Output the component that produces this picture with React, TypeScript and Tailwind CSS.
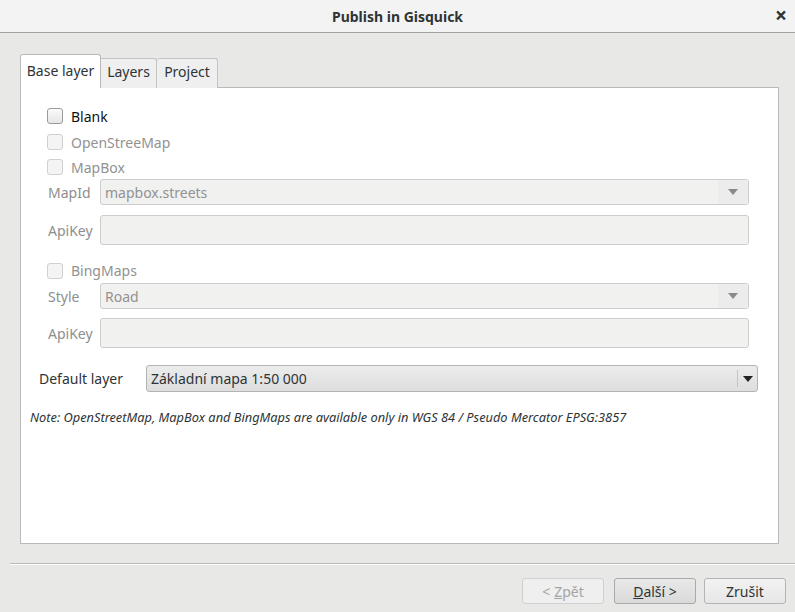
import React from 'react';

const font = { fontFamily: '"Noto Sans", "Open Sans", sans-serif' };

const Check: React.FC<{ label: string; disabled?: boolean }> = ({ label, disabled }) => (
  <div className="flex items-center h-full">
    <span className={`w-[16px] h-[16px] rounded-[3px] border ${disabled ? 'border-[#cfcfcf] bg-[#f4f4f4]' : 'border-[#9a9a9a] bg-gradient-to-b from-[#fbfbfb] to-[#e6e6e6]'}`} />
    <span className={`ml-[8px] text-[14px] ${disabled ? 'text-[#929292]' : 'text-[#111]'}`}>{label}</span>
  </div>
);

const Arrow: React.FC<{ color: string }> = ({ color }) => (
  <svg width="10" height="6" viewBox="0 0 10 6">
    <path d="M0 0h10L5 6z" fill={color} />
  </svg>
);

const DisabledCombo: React.FC<{ value: string }> = ({ value }) => (
  <div className="flex-1 h-[26px] flex items-center rounded-[3px] border border-[#cdcdcd] bg-[#f1f1f0] overflow-hidden">
    <span className="flex-1 pl-[4px] text-[14px] text-[#929292]">{value}</span>
    <span className="w-[30px] h-full flex items-center justify-center bg-[#ececec]">
      <Arrow color="#8a8a8a" />
    </span>
  </div>
);

const DisabledInput: React.FC = () => (
  <div className="flex-1 h-[30px] rounded-[3px] border border-[#cdcdcd] bg-[#f1f1f0]" />
);

const FieldRow: React.FC<{ label: string; children: React.ReactNode; className?: string }> = ({ label, children, className }) => (
  <div className={`flex items-center pl-[27px] pr-[29px] ${className ?? ''}`}>
    <span className="w-[52px] text-[14px] text-[#8e8e8e]">{label}</span>
    {children}
  </div>
);

const Button: React.FC<{ children: React.ReactNode; variant?: 'disabled' | 'default' | 'normal' }> = ({ children, variant = 'normal' }) => {
  const cls = variant === 'disabled'
    ? 'border-[#d0d0d0] bg-[#efefef] text-[#a4a4a4]'
    : variant === 'default'
      ? 'border-[#a9a9a9] bg-gradient-to-b from-[#e9e9e9] to-[#dadada] text-[#2e3436]'
      : 'border-[#b4b4b4] bg-gradient-to-b from-[#f2f2f2] to-[#e6e6e6] text-[#2e3436]';
  return (
    <div className={`w-[82px] h-[26px] rounded-[3px] border flex items-center justify-center text-[14px] ${cls}`}>
      {children}
    </div>
  );
};

export default function App() {
  return (
    <div className="w-[795px] h-[612px] bg-[#e8e8e7] flex flex-col overflow-hidden" style={font}>
      <div className="h-[33px] shrink-0 bg-[#f3f3f3] border-b border-[#a3a3a3] flex items-center relative">
        <span className="flex-1 text-center text-[14px] font-bold text-[#2e3436]">Publish in Gisquick</span>
        <span className="absolute right-[8px] top-[2px] text-[21px] leading-[26px] font-bold text-[#2e3436]">×</span>
      </div>

      <div className="flex flex-col pl-[20px] pr-[16px] pt-[21px]">
        <div className="flex items-end h-[34px] relative z-10">
          <div className="w-[81px] h-[34px] pb-[2px] bg-white border border-b-0 border-[#bababa] rounded-t-[3px] flex items-center justify-center text-[14px] text-[#2e3436]">Base layer</div>
          <div className="w-[56px] h-[30px] pb-[5px] bg-[#efefef] border border-l-0 border-b-0 border-[#c4c4c4] rounded-tr-[3px] flex items-center justify-center text-[14px] text-[#2e3436]">Layers</div>
          <div className="w-[61px] h-[30px] pb-[5px] bg-[#efefef] border border-l-0 border-b-0 border-[#c4c4c4] rounded-t-[3px] flex items-center justify-center text-[14px] text-[#2e3436]">Project</div>
        </div>
        <div className="h-[457px] -mt-px bg-white border border-[#bababa] flex flex-col pt-[15px]">
          <div className="h-[26px] pl-[26px]"><Check label="Blank" /></div>
          <div className="h-[26px] pl-[26px]"><Check label="OpenStreeMap" disabled /></div>
          <div className="h-[24px] pl-[26px]"><Check label="MapBox" disabled /></div>
          <FieldRow label="MapId"><DisabledCombo value="mapbox.streets" /></FieldRow>
          <FieldRow label="ApiKey" className="mt-[10px]"><DisabledInput /></FieldRow>
          <div className="h-[25px] pl-[26px] mt-[13px]"><Check label="BingMaps" disabled /></div>
          <FieldRow label="Style"><DisabledCombo value="Road" /></FieldRow>
          <FieldRow label="ApiKey" className="mt-[9px]"><DisabledInput /></FieldRow>

          <div className="flex items-center pl-[18px] pr-[20px] mt-[17px]">
            <span className="w-[107px] text-[14px] text-[#2e3436]">Default layer</span>
            <div className="flex-1 h-[27px] flex items-center rounded-[3px] border border-[#b3b3b3] bg-gradient-to-b from-[#ececec] to-[#dedede] overflow-hidden">
              <span className="flex-1 pl-[4px] text-[14px] text-[#2e3436]">Základní mapa 1:50 000</span>
              <span className="w-[20px] h-[17px] flex items-center justify-center border-l border-[#c4c4c4]">
                <Arrow color="#222" />
              </span>
            </div>
          </div>

          <p className="pl-[9px] mt-[16px] text-[12.8px] italic text-[#2e3436]">
            Note: OpenStreetMap, MapBox and BingMaps are available only in WGS 84 / Pseudo Mercator EPSG:3857
          </p>
        </div>
      </div>

      <div className="mt-[19px] ml-[10px] border-t border-[#bcbcbc] border-b border-b-white h-[2px]" />

      <div className="flex justify-end gap-[10px] pr-[9px] mt-[13px]">
        <Button variant="disabled">&lt; <span className="underline ml-[4px]">Z</span>pět</Button>
        <Button variant="default"><span className="underline">D</span>alší &gt;</Button>
        <div className="-ml-[2px]"><Button>Zrušit</Button></div>
      </div>
    </div>
  );
}
